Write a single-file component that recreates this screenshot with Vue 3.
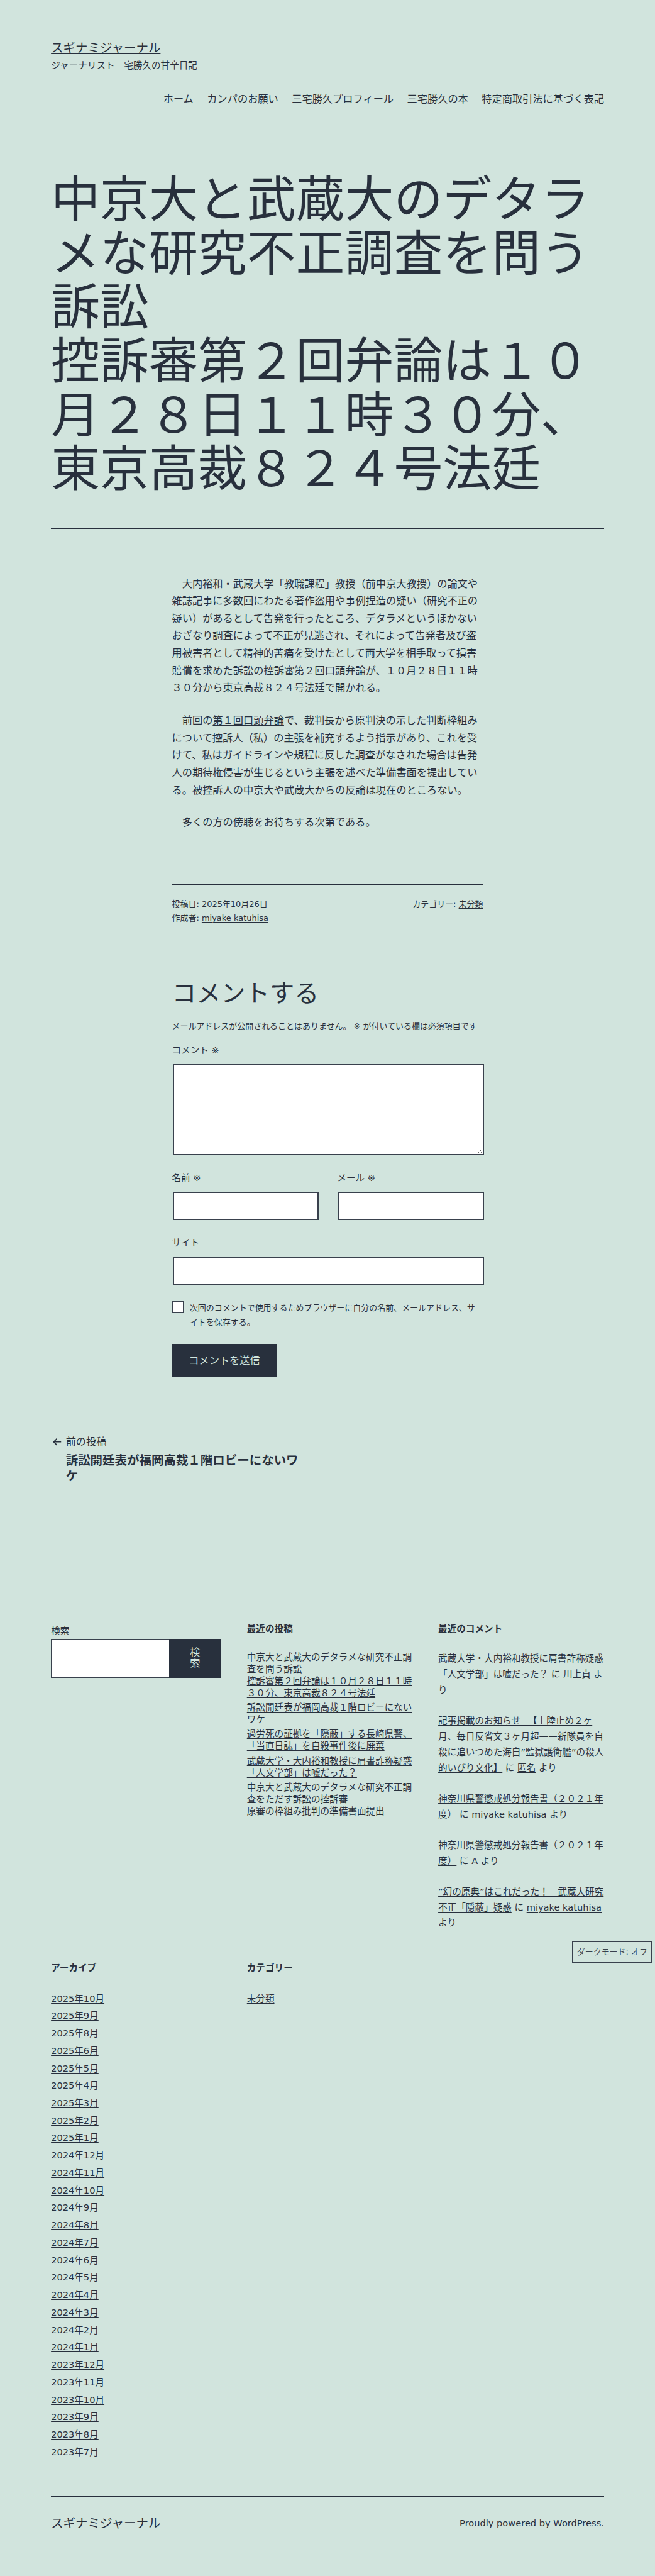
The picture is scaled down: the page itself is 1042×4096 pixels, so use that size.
<script setup>
const menu = ['ホーム', 'カンパのお願い', '三宅勝久プロフィール', '三宅勝久の本', '特定商取引法に基づく表記']

const recentPosts = [
  ['中京大と武蔵大のデタラメな研究不正調査を問う訴訟', '控訴審第２回弁論は１０月２８日１１時３０分、東京高裁８２４号法廷'],
  ['訴訟開廷表が福岡高裁１階ロビーにないワケ'],
  ['過労死の証拠を「隠蔽」する長崎県警、「当直日誌」を自殺事件後に廃棄'],
  ['武蔵大学・大内裕和教授に肩書詐称疑惑「人文学部」は嘘だった？'],
  ['中京大と武蔵大のデタラメな研究不正調査をただす訴訟の控訴審', '原審の枠組み批判の準備書面提出'],
]

const recentComments = [
  { post: '武蔵大学・大内裕和教授に肩書詐称疑惑「人文学部」は嘘だった？', author: '川上貞' },
  { post: '記事掲載のお知らせ 　【上陸止め２ヶ月、毎日反省文３ヶ月超——新隊員を自殺に追いつめた海自”監獄護衛艦”の殺人的いびり文化】', author: '匿名', link: true },
  { post: '神奈川県警懲戒処分報告書（２０２１年度）', author: 'miyake katuhisa', link: true },
  { post: '神奈川県警懲戒処分報告書（２０２１年度）', author: 'A' },
  { post: '”幻の原典”はこれだった！　武蔵大研究不正「隠蔽」疑惑', author: 'miyake katuhisa', link: true },
]

const archiveMonths = {
  2025: [10, 9, 8, 6, 5, 4, 3, 2, 1],
  2024: [12, 11, 10, 9, 8, 7, 6, 5, 4, 3, 2, 1],
  2023: [12, 11, 10, 9, 8, 7],
}
const archives = [2025, 2024, 2023].flatMap((y) => archiveMonths[y].map((m) => `${y}年${m}月`))
</script>

<template>
  <div class="page">
    <header class="site-header">
      <p class="site-title"><a href="#">スギナミジャーナル</a></p>
      <p class="tagline">ジャーナリスト三宅勝久の甘辛日記</p>
      <nav class="menu">
        <a v-for="item in menu" :key="item" href="#">{{ item }}</a>
      </nav>
    </header>

    <main>
      <h1 class="entry-title">中京大と武蔵大のデタラメな研究不正調査を問う訴訟<br />控訴審第２回弁論は１０月２８日１１時３０分、東京高裁８２４号法廷</h1>

      <div class="narrow">
        <article class="entry">
          <p>　大内裕和・武蔵大学「教職課程」教授（前中京大教授）の論文や雑誌記事に多数回にわたる著作盗用や事例捏造の疑い（研究不正の疑い）があるとして告発を行ったところ、デタラメというほかないおざなり調査によって不正が見逃され、それによって告発者及び盗用被害者として精神的苦痛を受けたとして両大学を相手取って損害賠償を求めた訴訟の控訴審第２回口頭弁論が、１０月２８日１１時３０分から東京高裁８２４号法廷で開かれる。</p>
          <p>　前回の<a href="#">第１回口頭弁論</a>で、裁判長から原判決の示した判断枠組みについて控訴人（私）の主張を補充するよう指示があり、これを受けて、私はガイドラインや規程に反した調査がなされた場合は告発人の期待権侵害が生じるという主張を述べた準備書面を提出している。被控訴人の中京大や武蔵大からの反論は現在のところない。</p>
          <p>　多くの方の傍聴をお待ちする次第である。</p>
        </article>

        <div class="entry-meta">
          <div>投稿日: 2025年10月26日<br />作成者: <a href="#">miyake katuhisa</a></div>
          <div>カテゴリー: <a href="#">未分類</a></div>
        </div>

        <form class="comment-form" @submit.prevent>
          <h2>コメントする</h2>
          <p class="notes">メールアドレスが公開されることはありません。 ※ が付いている欄は必須項目です</p>
          <div class="field comment">
            <label for="comment">コメント ※</label>
            <textarea id="comment"></textarea>
          </div>
          <div class="field-row">
            <div class="field">
              <label for="author">名前 ※</label>
              <input id="author" type="text" />
            </div>
            <div class="field">
              <label for="email">メール ※</label>
              <input id="email" type="text" />
            </div>
          </div>
          <div class="field">
            <label for="url">サイト</label>
            <input id="url" type="text" />
          </div>
          <div class="consent">
            <input id="consent" type="checkbox" />
            <label for="consent">次回のコメントで使用するためブラウザーに自分の名前、メールアドレス、サイトを保存する。</label>
          </div>
          <button class="submit" type="submit">コメントを送信</button>
        </form>
      </div>

      <nav class="post-nav">
        <a href="#">
          <span class="meta-nav">
            <svg width="24" height="24" viewBox="0 0 24 24" fill="currentColor"><path d="M20 13v-2H8l4-4-1-2-7 7 7 7 1-2-4-4z" /></svg>
            <span>前の投稿</span>
          </span>
          <span class="post-title">訴訟開廷表が福岡高裁１階ロビーにないワケ</span>
        </a>
      </nav>
    </main>

    <aside class="widgets">
      <section class="search">
        <label for="search">検索</label>
        <div class="search-box">
          <input id="search" type="text" />
          <button type="button">検<br />索</button>
        </div>
      </section>

      <section>
        <h2>最近の投稿</h2>
        <ul class="posts">
          <li v-for="(lines, i) in recentPosts" :key="i">
            <a href="#"><template v-for="(line, j) in lines" :key="j"><br v-if="j" />{{ line }}</template></a>
          </li>
        </ul>
      </section>

      <section>
        <h2>最近のコメント</h2>
        <ul class="comments">
          <li v-for="(c, i) in recentComments" :key="i">
            <a href="#">{{ c.post }}</a> に <a v-if="c.link" href="#">{{ c.author }}</a><span v-else>{{ c.author }}</span> より
          </li>
        </ul>
      </section>

      <section>
        <h2>アーカイブ</h2>
        <ul class="archives">
          <li v-for="month in archives" :key="month"><a href="#">{{ month }}</a></li>
        </ul>
      </section>

      <section>
        <h2>カテゴリー</h2>
        <ul class="archives">
          <li><a href="#">未分類</a></li>
        </ul>
      </section>
    </aside>

    <footer class="site-footer">
      <a class="footer-name" href="#">スギナミジャーナル</a>
      <div>Proudly powered by <a href="#">WordPress</a>.</div>
    </footer>

    <button class="dark-toggle" type="button">ダークモード: オフ</button>
  </div>
</template>

<style>
html,
body {
  margin: 0;
  background: #d1e4dd;
}
</style>

<style scoped>
.page {
  position: relative;
  zoom: 0.81155;
  width: 1284px;
  height: 5047px;
  box-sizing: border-box;
  padding: 78.4px 100px 0;
  overflow: hidden;
  background: #d1e4dd;
  color: #28303d;
  font-family: "DejaVu Sans", "Noto Sans CJK JP", sans-serif;
  font-size: 20px;
  line-height: 1.7;
}
.page * {
  box-sizing: border-box;
}
p,
h1,
h2,
ul {
  margin: 0;
  padding: 0;
}
ul {
  list-style: none;
}
a {
  color: inherit;
  text-decoration: underline 1px;
  text-underline-offset: 3px;
  text-decoration-skip-ink: all;
}
button,
input,
textarea {
  margin: 0;
  font: inherit;
  color: inherit;
  border-radius: 0;
}

.site-title {
  font-size: 24px;
  line-height: 1.3;
}
.tagline {
  margin-top: 3.4px;
  font-size: 18px;
}
.menu {
  display: flex;
  justify-content: flex-end;
  gap: 26.4px;
  margin-top: 34.2px;
}
.menu a {
  text-decoration: none;
}

.entry-title {
  margin-top: 128.1px;
  padding-bottom: 60.8px;
  border-bottom: 3px solid #28303d;
  font-size: 96px;
  font-weight: 400;
  line-height: 1.1;
}
.narrow {
  width: 610px;
  margin: 90.4px auto 0;
}
.entry p + p {
  margin-top: 30px;
}
.entry-meta {
  display: flex;
  justify-content: space-between;
  margin-top: 101.8px;
  padding-top: 25.2px;
  border-top: 3px solid #28303d;
  font-size: 16px;
}

.comment-form {
  margin-top: 103.4px;
}
.comment-form h2 {
  font-size: 48px;
  font-weight: 400;
  line-height: 1.3;
}
.notes {
  margin-top: 18.6px;
  font-size: 16px;
}
.field {
  display: flex;
  flex-direction: column;
  flex: 1;
  margin-top: 29.8px;
}
.field.comment {
  margin-top: 19.2px;
}
.field label {
  margin-bottom: 10.6px;
  font-size: 18px;
}
.field input,
.field textarea {
  position: relative;
  left: 2px;
  width: 100%;
  height: 56px;
  border: 3px solid #39414d;
  background: #fff;
}
.field textarea {
  height: 179px;
}
.field-row {
  display: flex;
  gap: 38px;
}
.consent {
  display: flex;
  gap: 10.5px;
  margin-top: 30px;
}
.consent input {
  appearance: none;
  flex: none;
  width: 24.5px;
  height: 25px;
  border: 3px solid #39414d;
  background: #fff;
}
.consent label {
  font-size: 16px;
  line-height: 28.6px;
}
.submit {
  display: block;
  height: 66px;
  margin-top: 28px;
  padding: 0 33px;
  border: 0;
  background: #28303d;
  color: #d1e4dd;
}

.post-nav {
  width: 500px;
  margin-top: 109.6px;
}
.post-nav a {
  text-decoration: none;
}
.meta-nav {
  display: flex;
  align-items: center;
  gap: 5px;
}
.post-title {
  display: block;
  margin: 3.9px 0 0 29px;
  font-size: 24px;
  font-weight: 700;
  line-height: 1.3;
}

.widgets {
  display: grid;
  grid-template-columns: 334px 325px 325px;
  grid-template-rows: 663.5px auto;
  column-gap: 50px;
  margin-top: 272.2px;
  font-size: 18px;
}
.widgets h2 {
  font-size: 18px;
  font-weight: 700;
  line-height: 1.3;
}
.search label {
  display: block;
  line-height: 30px;
}
.search-box {
  display: flex;
  height: 76px;
}
.search-box input {
  flex: 1;
  min-width: 0;
  border: 3px solid #39414d;
  border-right: 0;
  background: #fff;
}
.search-box button {
  width: 103px;
  padding: 0;
  border: 0;
  background: #28303d;
  color: #d1e4dd;
  font-size: 20px;
  line-height: 1;
}
.posts {
  margin-top: 31.2px;
  line-height: 1.3;
}
.posts li + li {
  margin-top: 5.4px;
}
.comments {
  margin-top: 30.6px;
}
.comments li + li {
  margin-top: 30px;
}
.archives {
  margin-top: 36.6px;
  line-height: 1.3;
}
.archives li + li {
  margin-top: 10.8px;
}

.site-footer {
  display: flex;
  align-items: center;
  justify-content: space-between;
  margin-top: 74.8px;
  padding-top: 30.5px;
  border-top: 3px solid #28303d;
  font-size: 18px;
}
.footer-name {
  font-size: 24px;
}
.dark-toggle {
  position: absolute;
  top: 3803px;
  right: 5px;
  width: 158px;
  height: 44px;
  padding: 0;
  border: 2.5px solid #39414d;
  background: #d1e4dd;
  color: #39414d;
  font-size: 16px;
  white-space: nowrap;
}
</style>
